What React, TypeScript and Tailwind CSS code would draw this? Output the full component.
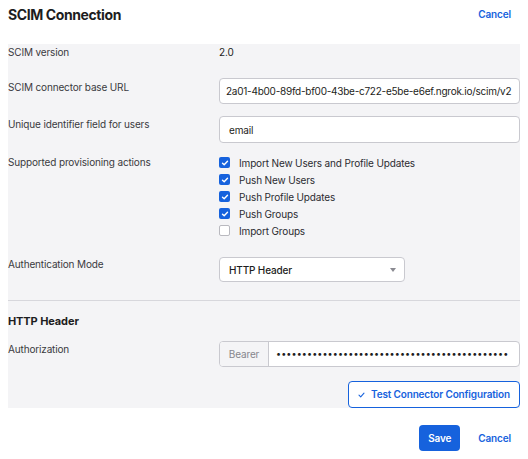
import { useState } from "react"

type Action = { label: string; checked: boolean }

const initialActions: Action[] = [
  { label: "Import New Users and Profile Updates", checked: true },
  { label: "Push New Users", checked: true },
  { label: "Push Profile Updates", checked: true },
  { label: "Push Groups", checked: true },
  { label: "Import Groups", checked: false },
]

function CheckBox({ checked }: { checked: boolean }) {
  return checked ? (
    <span className="flex h-[11px] w-[11px] items-center justify-center rounded-[2px] bg-[#1662dd]">
      <svg width="8" height="8" viewBox="0 0 8 8" fill="none">
        <path d="M1.5 4.2 3.2 5.8 6.5 2.3" stroke="white" strokeWidth="1.4" strokeLinecap="round" strokeLinejoin="round" />
      </svg>
    </span>
  ) : (
    <span className="h-[11px] w-[11px] rounded-[2px] border border-[#b9b9bf] bg-white" />
  )
}

export default function App() {
  const [actions, setActions] = useState(initialActions)
  const toggle = (i: number) =>
    setActions((prev) => prev.map((a, idx) => (idx === i ? { ...a, checked: !a.checked } : a)))

  return (
    <div className="h-[459px] w-[528px] bg-white font-['Inter',sans-serif] text-[10px] tracking-[-0.15px] text-[#1d1d21]">
      {/* header */}
      <div className="flex h-[29px] items-center justify-between pl-2 pr-[17px]">
        <h1 className="text-[14px] font-bold tracking-[-0.4px] text-[#1d1d21]">SCIM Connection</h1>
        <button type="button" className="font-semibold text-[#1662dd]">
          Cancel
        </button>
      </div>

      {/* settings panel */}
      <div className="mx-2 mt-[15px] w-[512px] bg-[#f4f4f6]">
        <div className="grid grid-cols-[211px_301px] leading-[16px]">
          <div className="text-[#3a3a40]">SCIM version</div>
          <div>2.0</div>

          <div className="mt-[18px] pt-[1px] text-[#3a3a40]">SCIM connector base URL</div>
          <div className="mt-[18px] flex h-[26px] items-center overflow-hidden whitespace-nowrap rounded-[4px] border border-[#c9c9cf] bg-white px-[6px] tracking-[-0.25px]">
            2a01-4b00-89fd-bf00-43be-c722-e5be-e6ef.ngrok.io/scim/v2
          </div>

          <div className="mt-[12px] text-[#3a3a40]">Unique identifier field for users</div>
          <div className="mt-[12px] flex h-[27px] items-center rounded-[4px] border border-[#c9c9cf] bg-white px-[9px]">
            email
          </div>

          <div className="mt-[11px] text-[#3a3a40]">Supported provisioning actions</div>
          <div className="mt-[11px] flex flex-col">
            {actions.map((a, i) => (
              <label
                key={a.label}
                onClick={() => toggle(i)}
                className="flex h-[17px] cursor-pointer items-center gap-[9px]"
              >
                <CheckBox checked={a.checked} />
                <span className="text-[#2b2b31]">{a.label}</span>
              </label>
            ))}
          </div>

          <div className="mt-[18px] leading-[14px] text-[#3a3a40]">Authentication Mode</div>
          <div className="mt-[18px]">
            <div className="flex h-[25px] w-[186px] items-center justify-between rounded-[4px] border border-[#c9c9cf] bg-white pl-[9px] pr-[8px]">
              <span className="font-medium">HTTP Header</span>
              <svg width="6" height="4" viewBox="0 0 6 4">
                <path d="M0 0h6L3 4z" fill="#8a8a91" />
              </svg>
            </div>
          </div>
        </div>

        <div className="mt-[18px] border-t border-[#d7d7dc]" />

        <h2 className="mt-[12px] text-[11px] font-bold leading-[16px] tracking-[-0.1px] text-[#1d1d21]">HTTP Header</h2>

        <div className="mt-[12px] grid grid-cols-[211px_301px] leading-[16px]">
          <div className="text-[#3a3a40]">Authorization</div>
          <div className="flex h-[26px] overflow-hidden rounded-[4px] border border-[#c9c9cf] bg-white">
            <span className="flex w-[49px] shrink-0 items-center justify-center border-r border-[#c9c9cf] bg-[#f4f4f6] text-[#86868d]">
              Bearer
            </span>
            <span className="flex min-w-0 flex-1 items-center overflow-hidden whitespace-nowrap pl-[7px] text-[9px] tracking-[0.1px] text-[#1d1d21]">
              {"•".repeat(45)}
            </span>
          </div>
        </div>

        <div className="mt-[14px] flex justify-end">
          <button
            type="button"
            className="flex h-[27px] w-[172px] items-center justify-center gap-[6px] whitespace-nowrap rounded-[4px] border border-[#1662dd] bg-white font-semibold text-[#1662dd]"
          >
            <svg width="7" height="6" viewBox="0 0 7 6" fill="none">
              <path d="M1 3.2 2.7 4.8 6 1.2" stroke="#1662dd" strokeWidth="1.1" strokeLinecap="round" strokeLinejoin="round" />
            </svg>
            Test Connector Configuration
          </button>
        </div>
      </div>

      {/* footer */}
      <div className="mt-[17px] flex items-center justify-end gap-[18px] pr-[17px]">
        <button
          type="button"
          className="h-[26px] w-[41px] rounded-[4px] bg-[#1662dd] font-semibold text-white"
        >
          Save
        </button>
        <button type="button" className="font-semibold text-[#1662dd]">
          Cancel
        </button>
      </div>
    </div>
  )
}
